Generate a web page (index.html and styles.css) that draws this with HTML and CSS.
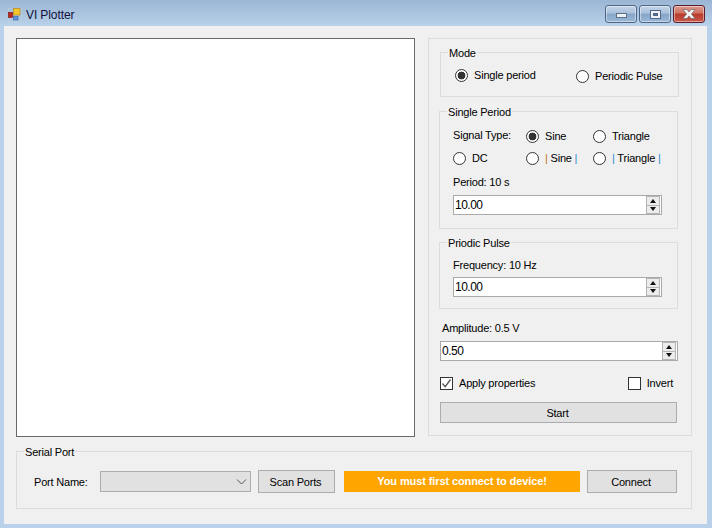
FILE: index.html
```html
<!DOCTYPE html>
<html lang="en">
<head>
  <meta charset="UTF-8" />
  <title>VI Plotter</title>
  <link rel="stylesheet" href="styles.css">
</head>
<body>

  <div class="titlebar">
    <svg class="app-icon" width="14" height="14" viewBox="0 0 14 14">
      <rect x="0" y="0" width="14" height="14" fill="none" stroke="#c3cfdc" stroke-width="1"/>
      <rect x="0.5" y="4.5" width="4" height="5" fill="#c0281e" stroke="#7c1a14" stroke-width="0.7"/>
      <rect x="5.5" y="0.5" width="6.5" height="6.5" fill="#f7c52c" stroke="#b98a18" stroke-width="0.7"/>
      <rect x="5.5" y="8.5" width="4.5" height="3.5" fill="#5f94e0" stroke="#3f6cb0" stroke-width="0.7"/>
    </svg>
    <span class="title-text">VI Plotter</span>
    <div class="win-buttons">
      <div class="win-btn"><span class="min-glyph"></span></div>
      <div class="win-btn"><span class="max-glyph"></span></div>
      <div class="win-btn close-btn">
        <svg width="16" height="10" viewBox="0 0 16 10">
          <path d="M2 0.5H6L8 3L10 0.5H14L10.5 5L14 9.5H10L8 7L6 9.5H2L5.5 5Z" fill="#f2f2f2" stroke="#6b6b6b" stroke-width="0.7"/>
        </svg>
      </div>
    </div>
  </div>

  <div class="client">
    <div class="top-row">
      <div class="plot"></div>

      <div class="panel">
        <fieldset class="mode-box">
          <legend>Mode</legend>
          <div class="mode-row">
            <label class="opt"><input type="radio" name="mode" checked /> Single period</label>
            <label class="opt low"><input type="radio" name="mode" /> Periodic Pulse</label>
          </div>
        </fieldset>

        <fieldset class="single-box">
          <legend>Single Period</legend>
          <div class="signal-grid">
            <span class="signal-label">Signal Type:</span>
            <label class="opt"><input type="radio" name="sig" checked /> Sine</label>
            <label class="opt"><input type="radio" name="sig" /> Triangle</label>
            <label class="opt"><input type="radio" name="sig" /> DC</label>
            <label class="opt"><input type="radio" name="sig" /> <span><i class="bar-o">|</i> Sine <i class="bar-b">|</i></span></label>
            <label class="opt"><input type="radio" name="sig" /> <span><i class="bar-b">|</i> Triangle <i class="bar-b">|</i></span></label>
          </div>
          <div class="field-label">Period: 10 s</div>
          <div class="spinbox">
            <input type="text" value="10.00" />
            <div class="spin"><span class="up"></span><span class="down"></span></div>
          </div>
        </fieldset>

        <fieldset class="pulse-box">
          <legend>Priodic Pulse</legend>
          <div class="field-label">Frequency: 10 Hz</div>
          <div class="spinbox">
            <input type="text" value="10.00" />
            <div class="spin"><span class="up"></span><span class="down"></span></div>
          </div>
        </fieldset>

        <div class="amp-label">Amplitude: 0.5 V</div>
        <div class="spinbox amp">
          <input type="text" value="0.50" />
          <div class="spin"><span class="up"></span><span class="down"></span></div>
        </div>

        <div class="check-row">
          <label class="opt">
            <span class="check">
              <svg width="11" height="11" viewBox="0 0 11 11"><path d="M1.5 5.5L4.2 8.6L9.5 1.5" fill="none" stroke="#555" stroke-width="1.3"/></svg>
            </span>
            Apply properties
          </label>
          <label class="opt"><span class="check"></span> Invert</label>
        </div>

        <button class="btn start-btn">Start</button>
      </div>
    </div>

    <fieldset class="serial-box">
      <legend>Serial Port</legend>
      <div class="serial-row">
        <span class="port-label">Port Name:</span>
        <div class="combo">
          <svg width="11" height="6" viewBox="0 0 11 6"><path d="M1 0.5L5.5 5L10 0.5" fill="none" stroke="#555" stroke-width="1"/></svg>
        </div>
        <button class="btn scan-btn">Scan Ports</button>
        <div class="warning">You must first connect to device!</div>
        <button class="btn connect-btn">Connect</button>
      </div>
    </fieldset>
  </div>

</body>
</html>
```

FILE: styles.css
```css
* {
  box-sizing: border-box;
  margin: 0;
  padding: 0;
}
body {
  width: 712px;
  height: 528px;
  overflow: hidden;
  font-family: 'Liberation Sans', Arial, sans-serif;
  font-size: 11px;
  letter-spacing: -0.2px;
  color: #000;
  background: linear-gradient(180deg, #9bb6d4 0, #b9d1ea 26px);
}

/* Title bar */
.titlebar {
  height: 26px;
  display: flex;
  align-items: flex-start;
  padding-left: 8px;
}
.app-icon {
  margin-top: 8px;
}
.title-text {
  margin-left: 4px;
  margin-top: 8px;
  font-size: 12px;
  line-height: 14px;
  letter-spacing: -0.1px;
  color: #10103a;
}
.win-buttons {
  margin-left: auto;
  margin-right: 7px;
  margin-top: 5px;
  display: flex;
  gap: 2px;
}
.win-btn {
  width: 32px;
  height: 18px;
  border: 1px solid #4e6788;
  border-radius: 3px;
  background: linear-gradient(180deg, #c2d4e8 0, #a9c0da 45%, #86a5c7 50%, #9ab7d6 100%);
  box-shadow: inset 0 0 0 1px rgba(255, 255, 255, 0.45);
  display: flex;
  align-items: center;
  justify-content: center;
}
.close-btn {
  border-color: #5c1e2a;
  background: linear-gradient(180deg, #dc9a90 0, #cf6f60 45%, #b8392a 50%, #c9584a 100%);
}
.min-glyph {
  width: 11px;
  height: 5px;
  margin-top: 3px;
  background: #eef1f5;
  border: 1px solid #5b6f88;
}
.max-glyph {
  width: 11px;
  height: 9px;
  background: #4f6a8c;
  border: 1px solid #4f6a8c;
  box-shadow: inset 0 0 0 2px #eef1f5;
}

/* Client area */
.client {
  width: 703px;
  height: 498px;
  margin-left: 4px;
  padding: 12px 15px 0 12px;
  background: #f0f0f0;
}
.top-row {
  display: flex;
  justify-content: space-between;
}
.plot {
  width: 399px;
  height: 399px;
  background: #fff;
  border: 1px solid #696969;
}
.panel {
  width: 264px;
  height: 398px;
  border: 1px solid #dcdcdc;
  padding: 0 13px 0 10px;
}

fieldset {
  border: 1px solid #dcdcdc;
}
legend {
  line-height: 14px;
  margin-left: 7px;
  padding: 0 1px;
  transform: translateY(1px);
}

.opt {
  display: flex;
  align-items: center;
  line-height: 14px;
  white-space: nowrap;
}
.opt input[type="radio"] {
  appearance: none;
  width: 13px;
  height: 13px;
  margin-right: 6px;
  border: 1px solid #333;
  border-radius: 50%;
  background: #fff;
  flex: none;
}
.opt input[type="radio"]:checked {
  background: radial-gradient(circle, #333 0, #333 3.6px, #fff 4.2px);
}

.mode-box {
  width: 239px;
  height: 52px;
  margin: 6px 0 0 1px;
}
.mode-row {
  display: flex;
  padding: 8px 0 0 14px;
}
.mode-row .opt:first-child {
  width: 121px;
}
.mode-row .low {
  margin-top: 2px;
}

.single-box {
  width: 239px;
  height: 125px;
  margin-top: 7px;
}
.signal-grid {
  display: grid;
  grid-template-columns: 73px 67px 1fr;
  grid-auto-rows: 22px;
  align-items: center;
  padding: 7px 0 0 13px;
}
.signal-label {
  margin-top: -2px;
}
.signal-grid i {
  font-style: normal;
}
.bar-o {
  color: #c8701c;
}
.bar-b {
  color: #2f86cc;
}
.field-label {
  line-height: 14px;
  padding: 6px 0 6px 13px;
}

.spinbox {
  display: flex;
  align-items: center;
  width: 209px;
  height: 20px;
  margin-left: 13px;
  border: 1px solid #a9a9a9;
  background: #fff;
}
.spinbox input {
  flex: 1;
  min-width: 0;
  height: 18px;
  border: none;
  outline: none;
  padding-left: 1px;
  font: 12px 'Liberation Sans', Arial, sans-serif;
  letter-spacing: -0.5px;
  background: transparent;
}
.spin {
  width: 14px;
  height: 18px;
  margin-right: 1px;
  display: flex;
  flex-direction: column;
}
.spin span {
  flex: 1;
  display: flex;
  align-items: center;
  justify-content: center;
  background: #ececec;
  border: 1px solid #b4b4b4;
}
.spin .down {
  border-top: none;
}
.up::before,
.down::before {
  content: "";
  border-left: 3.5px solid transparent;
  border-right: 3.5px solid transparent;
}
.up::before {
  border-bottom: 4px solid #111;
}
.down::before {
  border-top: 4px solid #111;
}

.pulse-box {
  width: 239px;
  height: 74px;
  margin-top: 6px;
}
.pulse-box .field-label {
  padding-top: 9px;
  padding-bottom: 5px;
}

.amp-label {
  line-height: 14px;
  margin: 12px 0 6px 3px;
}
.spinbox.amp {
  width: 238px;
  margin-left: 1px;
}

.check-row {
  display: flex;
  justify-content: space-between;
  padding: 15px 5px 0 1px;
}
.check {
  width: 13px;
  height: 13px;
  margin-right: 6px;
  border: 1px solid #333;
  background: #fff;
  display: flex;
  align-items: center;
  justify-content: center;
}

.btn {
  font: 11px 'Liberation Sans', Arial, sans-serif;
  letter-spacing: -0.2px;
  padding-right: 2px;
  background: #e1e1e1;
  border: 1px solid #adadad;
  color: #000;
}
.start-btn {
  display: block;
  width: 237px;
  height: 21px;
  margin: 12px 0 0 1px;
}

/* Serial port */
.serial-box {
  width: 676px;
  height: 65px;
  margin-top: 7px;
}
.serial-row {
  display: flex;
  align-items: center;
  padding: 12px 0 0 17px;
}
.port-label {
  width: 66px;
}
.combo {
  width: 151px;
  height: 21px;
  background: #e1e1e1;
  border: 1px solid #adadad;
  display: flex;
  align-items: center;
  justify-content: flex-end;
  padding-right: 3px;
}
.scan-btn {
  width: 77px;
  height: 23px;
  margin-left: 7px;
}
.warning {
  width: 236px;
  height: 21px;
  margin-left: 9px;
  background: #ffa500;
  color: #fff;
  font-weight: bold;
  letter-spacing: -0.1px;
  line-height: 21px;
  text-align: center;
}
.connect-btn {
  width: 90px;
  height: 23px;
  margin-left: 7px;
}
```
